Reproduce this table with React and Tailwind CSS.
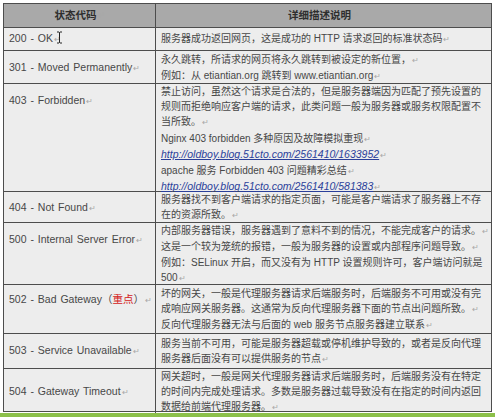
import React from "react";

const Mark = () => <span className="ml-px text-[8px] text-[#a8a8a8]">↵</span>;

const Link = ({ children }) => (
  <span className="italic underline text-[#2a3f9a] text-[10.5px]">{children}</span>
);

const rows = [
  {
    code: "200 - OK",
    h: "h-[23px]",
    left: "items-center",
    lines: [["服务器成功返回网页，这是成功的 HTTP 请求返回的标准状态码", true]],
    pt: "pt-[3px]",
  },
  {
    code: "301 - Moved Permanently",
    h: "h-[33px]",
    left: "items-center",
    lines: [
      ["永久跳转，所请求的网页将永久跳转到被设定的新位置，", true],
      ["例如：从 etiantian.org 跳转到 www.etiantian.org", true],
    ],
    pt: "pt-[1px]",
  },
  {
    code: "403 - Forbidden",
    h: "h-[108px]",
    left: "items-start pt-[9px]",
    lines: [
      ["禁止访问，虽然这个请求是合法的，但是服务器端因为匹配了预先设置的"],
      ["规则而拒绝响应客户端的请求，此类问题一般为服务器或服务权限配置不"],
      ["当所致。", true],
      ["Nginx  403  forbidden 多种原因及故障模拟重现", true, "mt-[1px]"],
      ["http://oldboy.blog.51cto.com/2561410/1633952", true, "", true],
      ["apache 服务 Forbidden  403 问题精彩总结", true],
      ["http://oldboy.blog.51cto.com/2561410/581383", true, "", true],
    ],
    pt: "pt-0",
  },
  {
    code: "404 - Not Found",
    h: "h-[31px]",
    left: "items-center",
    lines: [
      ["服务器找不到客户端请求的指定页面，可能是客户端请求了服务器上不存"],
      ["在的资源所致。", true],
    ],
    pt: "pt-0",
  },
  {
    code: "500 - Internal Server Error",
    h: "h-[62px]",
    left: "items-start pt-[9px]",
    lines: [
      ["内部服务器错误，服务器遇到了意料不到的情况，不能完成客户的请求。", true],
      ["这是一个较为笼统的报错，一般为服务器的设置或内部程序问题导致。", true],
      ["例如：SELinux 开启，而又没有为 HTTP 设置规则许可，客户端访问就是"],
      ["500", true],
    ],
    pt: "pt-0",
  },
  {
    code: "502 - Bad Gateway",
    red: true,
    h: "h-[49px]",
    left: "items-start pt-[7px]",
    lines: [
      ["坏的网关，一般是代理服务器请求后端服务时，后端服务不可用或没有完"],
      ["成响应网关服务器。这通常为反向代理服务器下面的节点出问题所致。", true],
      ["反向代理服务器无法与后面的 web 服务节点服务器建立联系", true],
    ],
    pt: "pt-[1px]",
  },
  {
    code: "503 - Service Unavailable",
    h: "h-[35px]",
    left: "items-center",
    lines: [
      ["服务当前不可用，可能是服务器超载或停机维护导致的，或者是反向代理"],
      ["服务器后面没有可以提供服务的节点", true],
    ],
    pt: "pt-[2px]",
  },
  {
    code: "504 - Gateway Timeout",
    h: "h-[43px]",
    left: "items-center",
    lines: [
      ["网关超时，一般是网关代理服务器请求后端服务时，后端服务没有在特定"],
      ["的时间内完成处理请求。多数是服务器过载导致没有在指定的时间内返回"],
      ["数据给前端代理服务器。", true],
    ],
    pt: "pt-0",
  },
];

export default function App() {
  return (
    <div className="relative w-[495px] h-[417px] bg-white overflow-hidden font-['Liberation_Sans','Noto_Sans_CJK_SC',sans-serif] text-[#474747]">
      <div className="flex flex-col h-full">
        <div className="ml-[3px] mt-[3px] w-[489px] border border-[#4d4d4d] bg-[#ededed]">
          {/* header */}
          <div className="grid grid-cols-[152px_1fr] h-[23px] bg-[#a9a9a9] text-[10.5px] font-bold text-[#2e2e2e]">
            <div className="flex items-center justify-center border-r border-[#4d4d4d]">
              状态代码<Mark />
            </div>
            <div className="flex items-center justify-center">
              详细描述说明<Mark />
            </div>
          </div>
          {rows.map((r, i) => (
            <div
              key={i}
              className={`grid grid-cols-[152px_1fr] border-t border-[#4d4d4d] ${r.h}`}
            >
              <div className={`flex px-[5px] border-r border-[#4d4d4d] text-[10.5px] [word-spacing:1px] ${r.left}`}>
                <span className="whitespace-nowrap leading-[15px]">
                  {r.code}
                  {r.red && (
                    <>
                      （<span className="text-[#d42020]">重点</span>）
                    </>
                  )}
                  <Mark />
                </span>
              </div>
              <div className={`flex flex-col px-[5px] text-[10px] leading-[15px] ${r.pt}`}>
                {r.lines.map(([t, mark, extra, link], j) => (
                  <div key={j} className={`whitespace-nowrap ${extra || ""}`}>
                    {link ? <Link>{t}</Link> : t}
                    {mark && <Mark />}
                  </div>
                ))}
              </div>
            </div>
          ))}
        </div>
        <div className="mt-auto h-[4px] bg-[#8cc04a]" />
      </div>
      {/* text cursor */}
      <svg className="absolute left-[56px] top-[31px]" width="7" height="13" viewBox="0 0 7 13">
        <path d="M1 1h2l0.5 0.5L4 1h2M3.5 1.5v10M1 12h2l0.5-0.5L4 12h2" stroke="#222" strokeWidth="1" fill="none" />
      </svg>
    </div>
  );
}
